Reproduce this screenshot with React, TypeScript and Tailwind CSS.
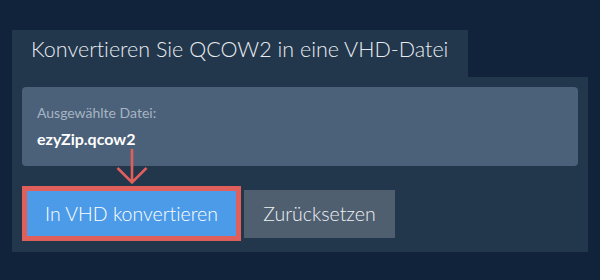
export default function App() {
  return (
    <div className="w-[600px] h-[280px] bg-[#10233a] pt-[30px] pl-[12px] relative" style={{ fontFamily: "Lato, 'Noto Sans', sans-serif" }}>
      <div className="w-[456px] h-[47px] bg-[#22364c] pl-[19px] pt-[7px]">
        <div className="text-[21.5px] leading-[24px] font-light text-[#e8ecf0] [font-variant-ligatures:none]">Konvertieren Sie QCOW2 in eine VHD-Datei</div>
      </div>
      <div className="w-[576px] h-[175px] bg-[#22364c] p-[10px]">
        <div className="h-[79px] rounded-[4px] bg-[#4b617a] px-[15px] pt-[17px]">
          <div className="text-[14px] leading-[17px] text-[#a7b4c3]">Ausgewählte Datei:</div>
          <div className="mt-[8px] text-[16px] leading-[19px] font-bold text-white">ezyZip.qcow2</div>
        </div>
        <div className="mt-[20px] flex items-center gap-[3px]">
          <button className="h-[55px] w-[219px] border-[5px] border-[#e05f5b] bg-[#4c9be8] text-[19.5px] font-light text-white [font-variant-ligatures:none]">In VHD konvertieren</button>
          <button className="h-[48px] w-[151px] bg-[#4f5f70] text-[19.5px] font-light text-[#eef1f4] [font-variant-ligatures:none]">Zurücksetzen</button>
        </div>
      </div>
      <svg className="absolute left-[114px] top-[147px]" width="36" height="38" viewBox="0 0 36 38">
        <path d="M18 2 L18 35 M3.5 21 L18 35.5 L32.5 21" fill="none" stroke="#e05f5b" strokeWidth="2.6" />
      </svg>
    </div>
  );
}
